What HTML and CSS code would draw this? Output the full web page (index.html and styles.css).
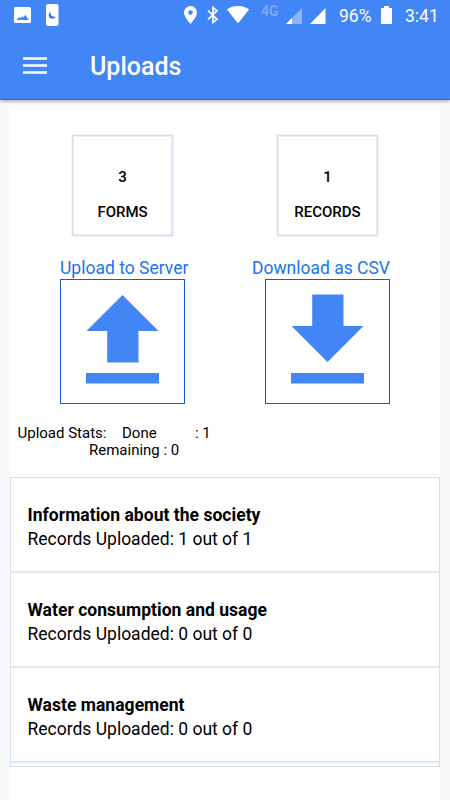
FILE: index.html
```html
<!DOCTYPE html>
<html lang="en">
<head>
  <meta charset="UTF-8">
  <meta name="viewport" content="width=device-width, initial-scale=1">
  <title>Uploads</title>
  <link rel="stylesheet" href="styles.css">
</head>
<body>
  <header class="header">
    <div class="statusbar">
      <svg class="icon-image" width="17" height="17" viewBox="0 0 17 17">
        <path fill="#fff" fill-rule="evenodd" d="M1.500 0h14q1.500 0 1.500 1.500v13q0 1.500-1.500 1.500h-14Q0 16 0 14.500v-13Q0 0 1.500 0zM2.500 13h12l-3-5.200-2.200 2.700-1.300-1.200-1.300 1.900-1.500-1.200z"/>
      </svg>
      <svg class="icon-phone" width="13" height="22" viewBox="0 0 13 22">
        <rect width="12.500" height="22" rx="2" fill="#fff"/>
        <path fill="#3578e5" d="M4.500 7.500C1.500 9.500 2.500 14.800 6.300 14.800C8 14.800 9.200 14 9.800 12.800C6.500 13.300 3.800 11 4.500 7.500z"/>
      </svg>
      <svg class="icon-pin" width="13" height="18" viewBox="0 0 13 18">
        <path fill="#fff" fill-rule="evenodd" d="M6.500 0A6.500 6.500 0 0 0 0 6.500C0 11 6.500 18 6.500 18S13 11 13 6.500A6.500 6.500 0 0 0 6.500 0zM6.500 4.300a2.300 2.300 0 1 1 0 4.600a2.300 2.300 0 0 1 0-4.600z"/>
      </svg>
      <svg class="icon-bluetooth" width="12" height="18" viewBox="0 0 12 18">
        <path fill="none" stroke="#fff" stroke-width="1.700" d="M1 4.500l9 8.800L6 16.500V1.500l4 3.200-9 8.800"/>
      </svg>
      <svg class="icon-wifi" width="22" height="18" viewBox="0 0 22 18">
        <path fill="#fff" d="M0 3.500C6-1.200 16-1.200 22 3.500L11 17.500z"/>
      </svg>
      <span class="network">4G</span>
      <svg class="icon-signal" width="16" height="16" viewBox="0 0 16 16">
        <path fill="#8db4f9" d="M0 16L16 0v16z"/>
        <path fill="#fff" d="M0 16l6-6v6z"/>
      </svg>
      <svg class="icon-signal-full" width="16" height="16" viewBox="0 0 16 16">
        <path fill="#fff" d="M0 16L15.500 0v16z"/>
      </svg>
      <span class="percent">96%</span>
      <svg class="icon-battery" width="11" height="18" viewBox="0 0 11 18">
        <path fill="#fff" d="M3 0h5v2h2.500q.5 0 .5.500v15q0 .5-.5.500H.500Q0 18 0 17.500v-15Q0 2 .500 2H3z"/>
      </svg>
      <span class="clock">3:41</span>
    </div>
    <div class="toolbar">
      <svg class="menu" width="24" height="17" viewBox="0 0 24 17">
        <path fill="#fff" d="M0 .300h24v2.500H0zM0 7.200h24v2.600H0zM0 14.200h24v2.500H0z"/>
      </svg>
      <h1 class="title">Uploads</h1>
    </div>
  </header>

  <main class="content">
    <div class="counts">
      <div class="count">
        <span>3</span>
        <span>FORMS</span>
      </div>
      <div class="count">
        <span>1</span>
        <span>RECORDS</span>
      </div>
    </div>

    <div class="actions">
      <a class="action">
        <span class="action_label">Upload to Server</span>
        <svg class="action_icon" viewBox="0 0 123 123">
          <path fill="#4285f4" d="M61.500 15L97.500 51H77.500V82.500H46.200V51H25.500zM25 93h73v10.500H25z"/>
        </svg>
      </a>
      <a class="action action_right">
        <span class="action_label">Download as CSV</span>
        <svg class="action_icon" viewBox="0 0 123 123">
          <path fill="#4285f4" d="M46.200 14.500H77.500V46H97.500L61.500 82 25.500 46H46.200zM25 93h73v10.500H25z"/>
        </svg>
      </a>
    </div>

    <div class="stats">
      <div class="stats_row"><span class="stats_head">Upload Stats:</span><span class="stats_done">Done</span><span>: 1</span></div>
      <div class="stats_row stats_remaining">Remaining : 0</div>
    </div>

    <div class="list">
      <div class="item">
        <h2>Information about the society</h2>
        <p>Records Uploaded: 1 out of 1</p>
      </div>
      <div class="item">
        <h2>Water consumption and usage</h2>
        <p>Records Uploaded: 0 out of 0</p>
      </div>
      <div class="item">
        <h2>Waste management</h2>
        <p>Records Uploaded: 0 out of 0</p>
      </div>
    </div>
  </main>
</body>
</html>
```

FILE: styles.css
```css
* {
  box-sizing: border-box;
}
body {
  margin: 0;
  background-color: #fafafa;
  color: #000;
  font-family: Roboto, "Liberation Sans", sans-serif;
}
svg {
  display: block;
  flex-shrink: 0;
}

/* header */
.header {
  height: 100px;
  background-color: #4285f4;
  border-bottom: 1px solid #1a73e8;
  box-shadow: 0 1px 4px rgba(0,0,0,0.4);
  color: #fff;
}
.statusbar {
  display: flex;
  align-items: flex-start;
  height: 32px;
  padding-left: 14px;
}
.icon-image {
  margin-top: 7px;
}
.icon-phone {
  margin: 4px 0 0 15px;
}
.icon-pin {
  margin: 6px 0 0 125px;
}
.icon-bluetooth {
  margin: 6px 0 0 10px;
}
.icon-wifi {
  margin: 6px 0 0 8px;
}
.network {
  width: 25px;
  margin: 3px 0 0 12px;
  color: #82adf8;
  font-size: 14px;
  font-weight: 500;
  line-height: 16px;
}
.icon-signal {
  margin-top: 8px;
}
.icon-signal-full {
  margin: 8px 0 0 8px;
}
.percent {
  width: 42px;
  margin: 5px 0 0 13px;
  font-size: 17.5px;
  line-height: 22px;
}
.icon-battery {
  margin-top: 6px;
}
.clock {
  margin: 5px 0 0 13px;
  font-size: 17.5px;
  line-height: 22px;
}
.toolbar {
  display: flex;
  align-items: center;
  height: 67px;
  padding-left: 23px;
}
.title {
  margin: 2px 0 0 43px;
  font-size: 25px;
  font-weight: 500;
  line-height: 30px;
}

/* content */
.content {
  height: 689px;
  margin: 10px 10px 0;
  padding-top: 25px;
  background-color: #fff;
}
.counts,
.actions {
  display: grid;
  grid-template-columns: 205px 205px;
  justify-content: center;
  justify-items: center;
}
.count {
  display: flex;
  flex-direction: column;
  align-items: center;
  gap: 15px;
  width: 101px;
  height: 101px;
  padding-top: 31px;
  border: 1px solid #d3e0ee;
  box-shadow: 0 0 2px rgba(0,0,0,0.15), inset 0 0 0 1px #e6edf5;
  font-size: 15px;
  font-weight: 500;
  line-height: 20px;
}
.actions {
  margin-top: 21px;
}
.action {
  display: flex;
  flex-direction: column;
  width: 125px;
  color: #1a73f0;
}
.action_right {
  align-items: flex-end;
}
.action_label {
  font-size: 17.5px;
  line-height: 22px;
  white-space: nowrap;
}
.action_icon {
  width: 125px;
  height: 125px;
  border: 1px solid #1258e0;
}

.stats {
  margin: 20px 0 0 7.5px;
  font-size: 15px;
  line-height: 18px;
}
.stats_row {
  display: flex;
}
.stats_head {
  width: 104.5px;
}
.stats_done {
  width: 73px;
}
.stats_remaining {
  padding-left: 71.5px;
  line-height: 16px;
}

/* forms list */
.list {
  height: 290px;
  margin-top: 19px;
  border: 1px solid #d3e0f0;
}
.item {
  height: 95px;
  padding: 25px 16.5px 0;
  border-bottom: 2px solid #e6e6e6;
}
.item h2,
.item p {
  margin: 0;
  font-size: 17.5px;
  line-height: 24px;
}
.item h2 {
  font-weight: 700;
  letter-spacing: 0.03px;
}
```
